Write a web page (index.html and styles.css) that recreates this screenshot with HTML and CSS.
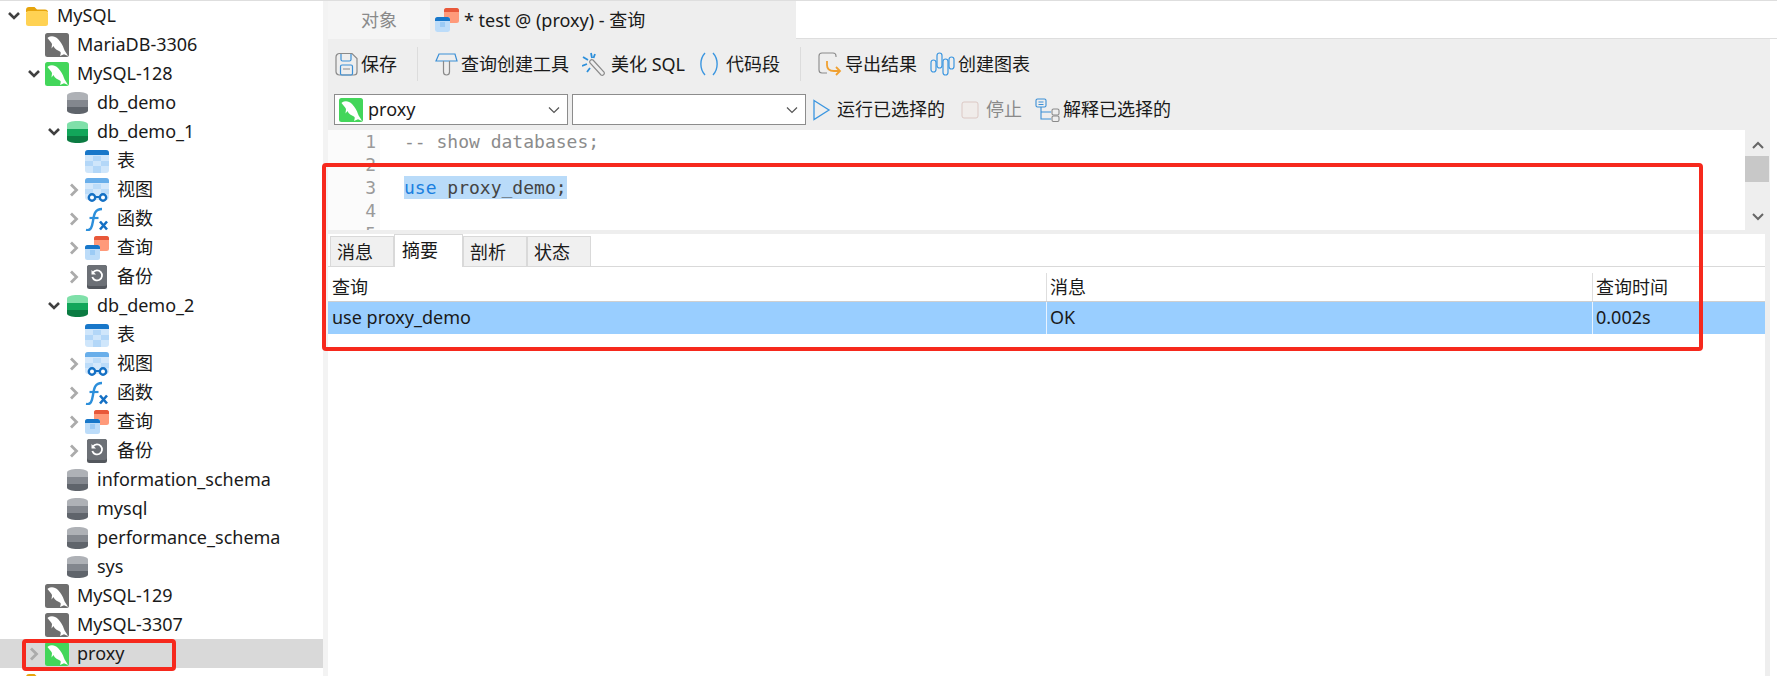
FILE: index.html
```html
<!DOCTYPE html>
<html lang="zh">
<head>
<meta charset="utf-8">
<title>test @ (proxy) - 查询</title>
<link rel="stylesheet" href="styles.css">
</head>
<body>
<svg class="defs" aria-hidden="true">
  <symbol id="down" viewBox="0 0 14 14"><path d="M2 4l5 5 5-5" fill="none" stroke="#404040" stroke-width="2.6"/></symbol>
  <symbol id="right" viewBox="0 0 14 14"><path d="M4 1.5l5.5 5.5L4 12.500" fill="none" stroke="#ababab" stroke-width="2.8"/></symbol>
  <symbol id="folder" viewBox="0 0 24 24"><path d="M1 6a3 3 0 0 1 3-3h5.500l2.500 2.500h8a3 3 0 0 1 3 3V8H1z" fill="#e6a40c"/><rect x="1" y="7" width="22" height="15" rx="2.500" fill="#ffd253"/></symbol>
  <symbol id="dolphin" viewBox="0 0 24 24"><path d="M3 4.500C6 2.500 10 3 13 6c3 3 5 7 6 10 .8 2.300 2.500 4 4 7l-4-1.800-4 1.800c.5-1.700 1-3 .5-4-2.500-1.800-5.500-2.500-7-6l-2 2.500.5-4.500c-1-2-2.500-3.500-4.500-6z" fill="#fff"/></symbol>
  <symbol id="conn-off" viewBox="0 0 24 24"><rect width="24" height="24" rx="2.500" fill="#6f6f6f"/><use href="#dolphin" width="24" height="24"/></symbol>
  <symbol id="conn-on" viewBox="0 0 24 24"><rect width="24" height="24" rx="2.500" fill="#43d65a"/><use href="#dolphin" width="24" height="24"/></symbol>
  <symbol id="db-off" viewBox="0 0 24 24"><path d="M2 4.500C2 2.500 6.500 1 12.500 1S23 2.500 23 4.500V9H2z" fill="#aeb1b6"/><path d="M2 9h21v7H2z" fill="#83878e"/><path d="M2 16h21v3.500c0 2-4.500 3.500-10.500 3.500S2 21.500 2 19.500z" fill="#5f646b"/></symbol>
  <symbol id="db-on" viewBox="0 0 24 24"><path d="M2 4.500C2 2.500 6.500 1 12.500 1S23 2.500 23 4.500V9H2z" fill="#7fe0a9"/><path d="M2 9h21v7H2z" fill="#12a65a"/><path d="M2 16h21v3.500c0 2-4.500 3.500-10.500 3.500S2 21.500 2 19.500z" fill="#0b7b42"/></symbol>
  <symbol id="table" viewBox="0 0 24 24"><rect y="1" width="24" height="23" rx="3" fill="#cfe6fb"/><path d="M8 7h8v5H8zM0 12h8v5H0zM16 12h8v5h-8zM8 17h8v7H8z" fill="#b3d7f8"/><path d="M0 4a3 3 0 0 1 3-3h18a3 3 0 0 1 3 3v2H0z" fill="#1877c9"/></symbol>
  <symbol id="view" viewBox="0 0 24 24"><rect y="0" width="24" height="22" rx="3" fill="#d4e8fb"/><path d="M0 3a3 3 0 0 1 3-3h18a3 3 0 0 1 3 3v2H0z" fill="#68aeea"/><path d="M8 6h8v5H8zM0 11h8v5H0zM16 11h8v5h-8z" fill="#bcdcf9"/><circle cx="7" cy="19.500" r="3.200" fill="#fff" stroke="#1470c4" stroke-width="2.400"/><circle cx="18" cy="19.500" r="3.200" fill="#fff" stroke="#1470c4" stroke-width="2.400"/><path d="M10 19h5" stroke="#1470c4" stroke-width="2"/></symbol>
  <symbol id="fx" viewBox="0 0 24 24"><path d="M1 23c5 1 6-3 7-9s1.500-12 9-12" fill="none" stroke="#2c8fdb" stroke-width="2.400"/><path d="M4.500 11h9" stroke="#2c8fdb" stroke-width="2.200"/><path d="M15 14.500l7 8M22 14.500l-7 8" stroke="#1470c4" stroke-width="2.600"/></symbol>
  <symbol id="query" viewBox="0 0 24 24"><rect x="9" y="0" width="15" height="15" rx="2.500" fill="#ff9a7a"/><path d="M9 2.500A2.500 2.500 0 0 1 11.500 0h10A2.500 2.500 0 0 1 24 2.500V4H9z" fill="#e8583a"/><rect x="0" y="9" width="15" height="15" rx="2.500" fill="#fff"/><rect x="0" y="9" width="15" height="15" rx="2.500" fill="#bcdcf9"/><path d="M5 14h5v5H5z" fill="#9ccbf5"/><path d="M0 11.500A2.500 2.500 0 0 1 2.500 9h10a2.500 2.500 0 0 1 2.500 2.500V13H0z" fill="#1877c9"/></symbol>
  <symbol id="backup" viewBox="0 0 24 24"><rect x="2" y="0" width="20" height="24" rx="2.500" fill="#53575d"/><rect x="2" y="0" width="20" height="21" rx="2.500" fill="#6c7076"/><path d="M8 7.500a5 5 0 1 1-.7 4.500" fill="none" stroke="#fff" stroke-width="1.800"/><path d="M6.500 5v4.500H11" fill="#fff"/></symbol>
</svg>

<aside class="side">
  <div class="tree">
    <div class="row"><svg class="chev"><use href="#down"/></svg><svg class="ico"><use href="#folder"/></svg><span>MySQL</span></div>
    <div class="row l1"><i class="chev"></i><svg class="ico"><use href="#conn-off"/></svg><span>MariaDB-3306</span></div>
    <div class="row l1"><svg class="chev"><use href="#down"/></svg><svg class="ico"><use href="#conn-on"/></svg><span>MySQL-128</span></div>
    <div class="row l2"><i class="chev"></i><svg class="ico"><use href="#db-off"/></svg><span>db_demo</span></div>
    <div class="row l2"><svg class="chev"><use href="#down"/></svg><svg class="ico"><use href="#db-on"/></svg><span>db_demo_1</span></div>
    <div class="row l3"><i class="chev"></i><svg class="ico"><use href="#table"/></svg><span>表</span></div>
    <div class="row l3"><svg class="chev"><use href="#right"/></svg><svg class="ico"><use href="#view"/></svg><span>视图</span></div>
    <div class="row l3"><svg class="chev"><use href="#right"/></svg><svg class="ico"><use href="#fx"/></svg><span>函数</span></div>
    <div class="row l3"><svg class="chev"><use href="#right"/></svg><svg class="ico"><use href="#query"/></svg><span>查询</span></div>
    <div class="row l3"><svg class="chev"><use href="#right"/></svg><svg class="ico"><use href="#backup"/></svg><span>备份</span></div>
    <div class="row l2"><svg class="chev"><use href="#down"/></svg><svg class="ico"><use href="#db-on"/></svg><span>db_demo_2</span></div>
    <div class="row l3"><i class="chev"></i><svg class="ico"><use href="#table"/></svg><span>表</span></div>
    <div class="row l3"><svg class="chev"><use href="#right"/></svg><svg class="ico"><use href="#view"/></svg><span>视图</span></div>
    <div class="row l3"><svg class="chev"><use href="#right"/></svg><svg class="ico"><use href="#fx"/></svg><span>函数</span></div>
    <div class="row l3"><svg class="chev"><use href="#right"/></svg><svg class="ico"><use href="#query"/></svg><span>查询</span></div>
    <div class="row l3"><svg class="chev"><use href="#right"/></svg><svg class="ico"><use href="#backup"/></svg><span>备份</span></div>
    <div class="row l2"><i class="chev"></i><svg class="ico"><use href="#db-off"/></svg><span>information_schema</span></div>
    <div class="row l2"><i class="chev"></i><svg class="ico"><use href="#db-off"/></svg><span>mysql</span></div>
    <div class="row l2"><i class="chev"></i><svg class="ico"><use href="#db-off"/></svg><span>performance_schema</span></div>
    <div class="row l2"><i class="chev"></i><svg class="ico"><use href="#db-off"/></svg><span>sys</span></div>
    <div class="row l1"><i class="chev"></i><svg class="ico"><use href="#conn-off"/></svg><span>MySQL-129</span></div>
    <div class="row l1"><i class="chev"></i><svg class="ico"><use href="#conn-off"/></svg><span>MySQL-3307</span></div>
    <div class="row l1 sel"><svg class="chev"><use href="#right"/></svg><svg class="ico"><use href="#conn-on"/></svg><span>proxy</span></div>
    <div class="row"><i class="chev"></i><svg class="ico"><use href="#folder"/></svg><span>Percona-331</span></div>
  </div>
</aside>

<main class="main">
  <div class="tabbar">
    <div class="tab tab-obj">对象</div>
    <div class="tab tab-act"><svg class="tab-ico"><use href="#query"/></svg><span>* test @ (proxy) - 查询</span></div>
  </div>
  <div class="work">
    <div class="bar bar1">
      <div class="tool"><svg class="w23" viewBox="0 0 23 24"><path d="M1 5a3.500 3.500 0 0 1 3.500-3.500H17l5 5V20a3 3 0 0 1-3 3H4.500A3.500 3.500 0 0 1 1 19.500z" fill="none" stroke="#8a8a8a" stroke-width="1.200"/><path d="M6 2v5.500a1.500 1.500 0 0 0 1.500 1.500h7A1.500 1.500 0 0 0 16 7.500V2" fill="none" stroke="#3b8fd6" stroke-width="1.200"/><rect x="5.500" y="13" width="12" height="10" rx="1.500" fill="none" stroke="#3b8fd6" stroke-width="1.200"/><path d="M8 17h7" stroke="#8a8a8a"/></svg><span>保存</span></div>
      <i class="sep"></i>
      <div class="tool"><svg class="w23" viewBox="0 0 23 24"><path d="M4 2h16l2 7H1z" fill="none" stroke="#3b8fd6" stroke-width="1.200"/><path d="M8.500 9v11a3 3 0 0 0 6 0V9" fill="none" stroke="#8a8a8a" stroke-width="1.200"/></svg><span>查询创建工具</span></div>
      <div class="tool"><svg class="w26" viewBox="0 0 26 24"><path d="M9 1l1 5M1 5l5 3M0 14l5-2M13 2l-1.500 4M5 20l3-4" stroke="#2c8fdb" stroke-width="1.800"/><path d="M11 8l11 12a2.200 2.200 0 0 1-3 3L8 11a2.200 2.200 0 0 1 3-3z" fill="none" stroke="#8a8a8a" stroke-width="1.200"/></svg><span>美化 SQL</span></div>
      <div class="tool"><svg class="w25" viewBox="0 0 25 24"><path d="M7 1C1.500 7 1.500 17 7 23M15 1c5.500 6 5.500 16 0 22" fill="none" stroke="#3b96e0" stroke-width="1.400"/></svg><span>代码段</span></div>
      <i class="sep"></i>
      <div class="tool"><svg class="w24" viewBox="0 0 24 24"><path d="M9 21H4a3 3 0 0 1-3-3V4a3 3 0 0 1 3-3h11a3 3 0 0 1 3 3v1" fill="none" stroke="#8a8a8a" stroke-width="1.100"/><path d="M9 9v4c0 4 3 6 7 6h6m-4-4l4 4-4 4" fill="none" stroke="#f0a030" stroke-width="1.800"/></svg><span>导出结果</span></div>
      <div class="tool"><svg class="w25" viewBox="0 0 25 24"><g fill="none" stroke="#3b96e0" stroke-width="1.200"><rect x="1" y="8" width="5" height="12" rx="2.500"/><rect x="7" y="1" width="5" height="15" rx="2.500"/><rect x="13" y="7" width="5" height="16" rx="2.500"/><rect x="19" y="5" width="5" height="12" rx="2.500"/></g></svg><span>创建图表</span></div>
    </div>
    <div class="bar bar2">
      <div class="sel-box"><svg class="sel-ico"><use href="#conn-on"/></svg><span>proxy</span><svg class="sel-arrow" viewBox="0 0 12 8"><path d="M1 1.500l5 5 5-5" fill="none" stroke="#555" stroke-width="1.200"/></svg></div>
      <div class="sel-box"><svg class="sel-arrow" viewBox="0 0 12 8"><path d="M1 1.500l5 5 5-5" fill="none" stroke="#555" stroke-width="1.200"/></svg></div>
      <div class="tool push-lg"><svg class="w21" viewBox="0 0 21 24"><path d="M1 2.500L16 12 1 21.500z" fill="none" stroke="#3b96e0" stroke-width="1.300"/></svg><span>运行已选择的</span></div>
      <div class="tool push-sm off"><svg class="w22" viewBox="0 0 22 24"><rect x="1" y="4" width="16" height="16" rx="2" fill="#f0ecea" stroke="#dcc8c4"/></svg><span>停止</span></div>
      <div class="tool"><svg class="w25" viewBox="0 0 25 24"><g fill="none" stroke="#3b8fd6" stroke-width="1.100"><rect x="1" y="1" width="10" height="8" rx="1.500"/><path d="M3.500 4h5M3.500 6.500h5M6 9v12h10M6 14h10"/></g><g fill="none" stroke="#8a8a8a" stroke-width="1.100"><rect x="17" y="11" width="7" height="6" rx="1.500"/><rect x="17" y="18" width="7" height="5.500" rx="1.500"/></g></svg><span>解释已选择的</span></div>
    </div>
    <div class="edit-wrap">
      <div class="editor">
        <div class="gutter"><div>1</div><div>2</div><div>3</div><div>4</div><div>5</div></div>
        <div class="code">
          <div class="cm">-- show databases;</div>
          <div>&nbsp;</div>
          <div><span class="hl"><span class="kw">use</span> proxy_demo;</span></div>
          <div>&nbsp;</div>
          <div>&nbsp;</div>
        </div>
      </div>
      <div class="vscroll">
        <svg class="arr" viewBox="0 0 12 8"><path d="M1 7l5-5 5 5" fill="none" stroke="#666" stroke-width="2"/></svg>
        <div class="thumb"></div>
        <svg class="arr arr-dn" viewBox="0 0 12 8"><path d="M1 1l5 5 5-5" fill="none" stroke="#666" stroke-width="2"/></svg>
      </div>
    </div>
    <section class="results">
      <div class="rtabs">
        <div class="rtab">消息</div>
        <div class="rtab on">摘要</div>
        <div class="rtab">剖析</div>
        <div class="rtab">状态</div>
      </div>
      <div class="grid head"><div>查询</div><div>消息</div><div>查询时间</div></div>
      <div class="grid data"><div>use proxy_demo</div><div>OK</div><div>0.002s</div></div>
    </section>
  </div>
</main>

<div class="mark mark-main"></div>
<div class="mark mark-side"></div>
</body>
</html>
```

FILE: styles.css
```css
* { box-sizing: border-box; }
html, body { margin: 0; height: 676px; overflow: hidden; }
body {
  display: flex;
  position: relative;
  background: #fff;
  border-top: 1px solid #dedede;
  font: 18px/29px "Noto Sans", "Noto Sans CJK SC", sans-serif;
  color: #1a1a1a;
}
.defs { position: absolute; width: 0; height: 0; }

.side { width: 328px; flex: none; border-right: 5px solid #f3f3f3; overflow: hidden; }
.row { display: flex; align-items: center; height: 29px; white-space: nowrap; }
.row span { margin-left: 8px; }
.l1 { padding-left: 20px; }
.l2 { padding-left: 40px; }
.l3 { padding-left: 60px; }
.sel { background: #d9d9d9; }
.chev { display: block; flex: none; width: 25px; height: 14px; padding-left: 3px; overflow: visible; }
.ico { display: block; flex: none; width: 24px; height: 24px; }

.main { flex: 1; min-width: 0; display: flex; flex-direction: column; }
.tabbar { display: flex; height: 38px; border-bottom: 1px solid #dedede; flex: none; }
.tab { display: flex; align-items: center; height: 38px; }
.tab-obj { width: 102px; justify-content: center; background: #f5f5f5; color: #8a8a8a; }
.tab-act { width: 366px; background: #eee; padding-left: 5px; gap: 5px; }
.tab-ico { width: 24px; height: 24px; }

.work { flex: 1; margin-right: 7px; background: #eee; display: flex; flex-direction: column; min-height: 0; }
.bar { display: flex; align-items: center; flex: none; white-space: nowrap; }
.bar1 { height: 50px; padding-left: 7px; gap: 13px; }
.bar2 { height: 41px; padding-left: 6px; gap: 13px; }
.tool { display: flex; align-items: center; gap: 3px; }
.w21 { width: 21px; height: 24px; }
.w22 { width: 22px; height: 24px; }
.w23 { width: 23px; height: 24px; }
.w24 { width: 24px; height: 24px; }
.w25 { width: 25px; height: 24px; }
.w26 { width: 26px; height: 24px; }
.sep { width: 1px; height: 34px; background: #dcdcdc; margin: 0 4px 0 7px; }
.off { color: #8a8a8a; }
.push-lg { margin-left: 3px; }
.push-sm { margin-left: 3px; }

.sel-box {
  width: 234px; height: 31px; margin-right: -9px;
  display: flex; align-items: center;
  background: #fff; border: 1px solid #8c8c8c;
  padding: 0 7px 0 4px; gap: 5px;
}
.sel-ico { width: 24px; height: 24px; }
.sel-arrow { width: 12px; height: 8px; margin-left: auto; }

.edit-wrap { display: flex; height: 100px; flex: none; }
.editor { flex: 1; display: flex; background: #fff; overflow: hidden; font: 18px/23.100px "DejaVu Sans Mono", monospace; }
.gutter { width: 52px; padding-right: 4px; text-align: right; background: #fbfbfb; color: #9a9a9a; flex: none; }
.code { padding-left: 24px; color: #444; }
.cm { color: #8c8c8c; }
.hl { background: #b9dbf9; display: inline-block; }
.kw { color: #1a7fe0; }
.vscroll { width: 25px; flex: none; display: flex; flex-direction: column; align-items: stretch; padding-right: 1px; }
.arr { width: 12px; height: 8px; margin: 11px 0 0 7px; flex: none; }
.thumb { height: 26px; margin-top: 7px; background: #c8c8c8; flex: none; }
.arr-dn { margin-top: 31px; }

.results { flex: 1; margin-top: 4px; margin-right: 5px; background: #fff; min-height: 0; }
.rtabs { display: flex; align-items: flex-end; height: 33px; padding-left: 2px; border-bottom: 1px solid #d9d9d9; }
.rtab { width: 64px; height: 30px; line-height: 30px; padding-left: 6px; background: #f0f0f0; border: 1px solid #d9d9d9; border-bottom: 0; border-left-color: #d9d9d9; margin-right: 0; }
.rtab.on { width: 69px; height: 33px; background: #fff; line-height: 30px; padding-left: 7px; position: relative; top: 1px; }
.grid { display: grid; grid-template-columns: 718px 546px 1fr; }
.grid > div { padding-left: 4px; }
.head { height: 35px; padding-top: 6px; border-bottom: 1px solid #cfcfcf; }
.head > div { height: 28px; line-height: 28px; }
.head > div + div { border-left: 1px solid #dedede; padding-left: 3px; }
.data { height: 32px; background: #99ceff; }
.data > div { line-height: 31px; }
.data > div + div { border-left: 1px solid #e8f3ff; padding-left: 3px; }

.mark { position: absolute; border: 4px solid #f6291d; border-radius: 4px; pointer-events: none; }
.mark-main { left: 322px; top: 162px; width: 1381px; height: 188px; }
.mark-side { left: 22px; top: 638px; width: 154px; height: 32px; }
```
